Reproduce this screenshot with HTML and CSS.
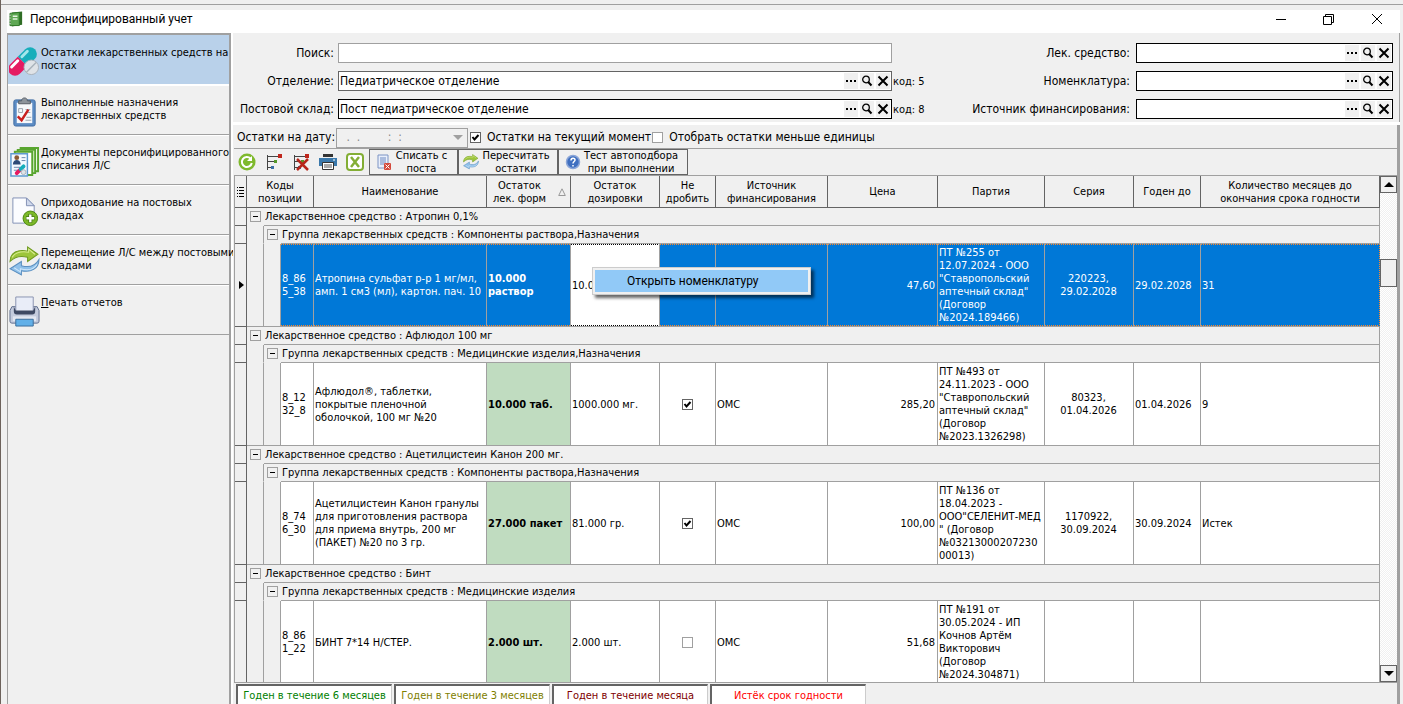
FILE: index.html
```html
<!DOCTYPE html>
<html lang="ru">
<head>
    <title>Персонифицированный учет</title>
    <meta charset="UTF-8">
    <meta name="viewport" content="width=device-width, initial-scale=1">
    <link rel="stylesheet" href="styles.css">
</head>
<body>
<svg class="sprite" aria-hidden="true">
    <symbol id="zoom" viewBox="0 0 12 12">
        <circle cx="5" cy="4.500" r="3.300" fill="none" stroke="#000" stroke-width="1.300"/>
        <path d="M7.200 7L10.500 10.500" stroke="#000" stroke-width="2"/>
    </symbol>
    <symbol id="cross" viewBox="0 0 12 12">
        <path d="M1.500 1.500L10.500 10.500M10.500 1.500L1.500 10.500" stroke="#000" stroke-width="2"/>
    </symbol>
    <symbol id="dots" viewBox="0 0 12 12">
        <path d="M1 5h2v2H1zM5 5h2v2H5zM9 5h2v2H9z"/>
    </symbol>
    <symbol id="swap" viewBox="0 0 30 30">
        <path d="M1 15C1 6 9 3 18 5V1l10 7-10 7v-4C11 9 6 10 1 15z" fill="#9cc53b" stroke="#6f9a1f"/>
        <path d="M29 13c0 9-8 13-17 11v4L1 22l11-7v4c7 2 13 1 17-6z" fill="#8fc1ea" stroke="#5b8fc0"/>
        <path d="M3 11c3-5 9-6 16-5V3l6 5" fill="none" stroke="#d7ec8e"/>
        <path d="M27 18c-3 5-9 6-16 4v3l-6-4" fill="none" stroke="#cfe6fa"/>
    </symbol>
    <symbol id="tree" viewBox="0 0 18 18">
        <path d="M2.500 2v15M2 3.500h11M2 8.500h7M2 14.500h5" fill="none" stroke="#444"/>
        <path d="M13 1h4v4h-4z" fill="#c0271d"/>
        <path d="M9 7h3v3H9z" fill="#55992a"/>
        <path d="M6 13h3v3H6z" fill="#3a6ea5"/>
    </symbol>
</svg>

<div class="outer-bar"></div>
<div class="window">
    <header class="titlebar">
        <svg class="app-icon" viewBox="0 0 16 16">
            <path d="M3 1l11-1v14L3 16z" fill="#2f6d25"/>
            <path d="M1 2l10-1v14H1z" fill="#5fa854" stroke="#2f7a28"/>
            <path d="M4 5h5M4 8h5" stroke="#e8f5e2" stroke-width="1.500"/>
            <path d="M0 4h2M0 7h2M0 10h2M0 13h2" stroke="#ccc"/>
        </svg>
        <h1>Персонифицированный учет</h1>
        <div class="window-buttons">
            <button aria-label="Свернуть"><svg viewBox="0 0 12 12"><path d="M1 6.500h10" stroke="#000"/></svg></button>
            <button aria-label="Восстановить"><svg viewBox="0 0 12 12"><path d="M.5 3.500h8v8h-8zM2.500 3V1.500h8v8H9" fill="none" stroke="#000"/></svg></button>
            <button aria-label="Закрыть"><svg viewBox="0 0 12 12"><path d="M1 1l10 10M11 1L1 11" stroke="#000"/></svg></button>
        </div>
    </header>

    <div class="content">
        <nav class="sidebar">
            <button class="nav-item active">
                <svg viewBox="0 0 32 32">
                    <g transform="rotate(-45 14 16)">
                        <path d="M14 9h11a7 7 0 0 1 0 14H14z" fill="#17aebb"/>
                        <path d="M14 9H3a7 7 0 0 0 0 14h11z" fill="#e51b61"/>
                        <path d="M2 12h9" stroke="#fff" stroke-width="3" stroke-linecap="round"/>
                        <path d="M17 12h8" stroke="#a3e7ec" stroke-width="3" stroke-linecap="round"/>
                    </g>
                    <circle cx="23" cy="22" r="7.500" fill="#dfe3e7" stroke="#a9b2ba"/>
                    <path d="M18 27L28 17" stroke="#a9b2ba" stroke-width="1.500"/>
                </svg>
                <span>Остатки лекарственных средств на<br>постах</span>
            </button>
            <button class="nav-item">
                <svg viewBox="0 0 32 32">
                    <rect x="5" y="4" width="22" height="27" rx="2" fill="#5c8cc4" stroke="#3f6ba3"/>
                    <rect x="8" y="7" width="16" height="21" fill="#f6f8fb"/>
                    <path d="M10 8V5h3c0-4 6-4 6 0h3v3z" fill="#8d949c" stroke="#555c64"/>
                    <path d="M10 13h4v4h-4zM17 14h5M17 17h5M18 22h5M17 25h6" fill="none" stroke="#9aa3ad"/>
                    <path d="M9 21l4 4 7-11" fill="none" stroke="#c81f1f" stroke-width="2.500"/>
                </svg>
                <span>Выполненные назначения<br>лекарственных средств</span>
            </button>
            <button class="nav-item">
                <svg viewBox="0 0 32 32">
                    <path d="M12 2h18v24H12z" fill="#fff" stroke="#58a52f" stroke-width="2"/>
                    <path d="M9 4h18v24H9z" fill="#dff2d2" stroke="#58a52f" stroke-width="2"/>
                    <path d="M6 6h18v24H6z" fill="#fff" stroke="#58a52f" stroke-width="2"/>
                    <path d="M2 8h17v23H2z" fill="#f4f9ff" stroke="#5d9ad0" stroke-width="1.500"/>
                    <circle cx="8" cy="12" r="2.500" fill="#8a5a35"/>
                    <path d="M4 19c0-6 8-6 8 0z" fill="#2d4a77"/>
                    <path d="M13 12h4M13 15h4M5 22h7M5 25h5" stroke="#6a88ad"/>
                    <path d="M8 28l4-4" stroke="#e51b61" stroke-width="4" stroke-linecap="round"/>
                    <path d="M12 24l3-3" stroke="#17aebb" stroke-width="4" stroke-linecap="round"/>
                    <circle cx="15" cy="27" r="2.500" fill="#dfe3e7" stroke="#a9b2ba"/>
                </svg>
                <span>Документы персонифицированного<br>списания Л/С</span>
            </button>
            <button class="nav-item">
                <svg viewBox="0 0 32 32">
                    <path d="M4 2h14l8 8v18H4z" fill="#fbfcff" stroke="#8291b5"/>
                    <path d="M18 2v8h8z" fill="#cfd8ec" stroke="#8291b5"/>
                    <circle cx="22" cy="23" r="7.500" fill="#7cb928" stroke="#4c8512"/>
                    <path d="M22 18.500v9M17.500 23h9" stroke="#447611" stroke-width="4"/>
                    <path d="M22 19v8M18 23h8" stroke="#fff" stroke-width="2.500"/>
                </svg>
                <span>Оприходование на постовых<br>складах</span>
            </button>
            <button class="nav-item">
                <svg><use href="#swap"/></svg>
                <span>Перемещение Л/С между постовыми<br>складами</span>
            </button>
            <button class="nav-item">
                <svg viewBox="0 0 32 32">
                    <path d="M3 11h26l2 4v11q0 2-2 2H3q-2 0-2-2V15z" fill="#c4cbdd" stroke="#626f8f"/>
                    <path d="M7 1h18v15H7z" fill="#e9edf8" stroke="#8993b0"/>
                    <path d="M5 11v5q0 3 3 3h16q3 0 3-3v-5l-2 4H7z" fill="#3e4963"/>
                    <path d="M4 21h24v5H4z" fill="#e3e7f1"/>
                    <path d="M7 24h18v7H7z" fill="#62b0e8" stroke="#3b6d9c"/>
                </svg>
                <span><u>П</u>ечать отчетов</span>
            </button>
        </nav>

        <main class="main">
            <section class="filters">
                <div class="filter-group wide">
                    <div class="field">
                        <label for="search">Поиск:</label>
                        <div class="lookup plain"><input id="search" type="text"></div>
                        <span class="code"></span>
                    </div>
                    <div class="field">
                        <label for="department">Отделение:</label>
                        <div class="lookup gray">
                            <input id="department" type="text" value="Педиатрическое отделение">
                            <button aria-label="Выбрать"><svg><use href="#dots"/></svg></button>
                            <button aria-label="Найти"><svg><use href="#zoom"/></svg></button>
                            <button aria-label="Очистить"><svg><use href="#cross"/></svg></button>
                        </div>
                        <span class="code">код: 5</span>
                    </div>
                    <div class="field">
                        <label for="stock">Постовой склад:</label>
                        <div class="lookup">
                            <input id="stock" type="text" value="Пост педиатрическое отделение">
                            <button aria-label="Выбрать"><svg><use href="#dots"/></svg></button>
                            <button aria-label="Найти"><svg><use href="#zoom"/></svg></button>
                            <button aria-label="Очистить"><svg><use href="#cross"/></svg></button>
                        </div>
                        <span class="code">код: 8</span>
                    </div>
                </div>
                <div class="filter-group">
                    <div class="field">
                        <label for="drug">Лек. средство:</label>
                        <div class="lookup">
                            <input id="drug" type="text">
                            <button aria-label="Выбрать"><svg><use href="#dots"/></svg></button>
                            <button aria-label="Найти"><svg><use href="#zoom"/></svg></button>
                            <button aria-label="Очистить"><svg><use href="#cross"/></svg></button>
                        </div>
                    </div>
                    <div class="field">
                        <label for="nomenclature">Номенклатура:</label>
                        <div class="lookup">
                            <input id="nomenclature" type="text">
                            <button aria-label="Выбрать"><svg><use href="#dots"/></svg></button>
                            <button aria-label="Найти"><svg><use href="#zoom"/></svg></button>
                            <button aria-label="Очистить"><svg><use href="#cross"/></svg></button>
                        </div>
                    </div>
                    <div class="field">
                        <label for="funding">Источник финансирования:</label>
                        <div class="lookup">
                            <input id="funding" type="text">
                            <button aria-label="Выбрать"><svg><use href="#dots"/></svg></button>
                            <button aria-label="Найти"><svg><use href="#zoom"/></svg></button>
                            <button aria-label="Очистить"><svg><use href="#cross"/></svg></button>
                        </div>
                    </div>
                </div>
            </section>

            <div class="workspace">
                <div class="date-row">
                    <label for="date">Остатки на дату:</label>
                    <select id="date" disabled>
                        <option>&nbsp;.&nbsp; .&nbsp; &nbsp; &nbsp; &nbsp; :&nbsp; :</option>
                    </select>
                    <input type="checkbox" id="current" checked>
                    <label for="current">Остатки на текущий момент</label>
                    <input type="checkbox" id="less">
                    <label for="less">Отобрать остатки меньше единицы</label>
                </div>

                <div class="toolbar">
                    <button class="tool" aria-label="Обновить">
                        <svg viewBox="0 0 18 18">
                            <circle cx="9" cy="9" r="8.500" fill="#7fb92d"/>
                            <path d="M12.500 5.500A5 5 0 1 0 13.800 10" fill="none" stroke="#fff" stroke-width="2"/>
                            <path d="M14 3v5H9z" fill="#fff"/>
                        </svg>
                    </button>
                    <button class="tool" aria-label="Развернуть"><svg><use href="#tree"/></svg></button>
                    <button class="tool" aria-label="Свернуть группы">
                        <svg viewBox="0 0 18 18">
                            <use href="#tree" width="18" height="18"/>
                            <path d="M5 6l11 11M16 6L5 17" stroke="#b7261b" stroke-width="2.500"/>
                        </svg>
                    </button>
                    <button class="tool" aria-label="Печать">
                        <svg viewBox="0 0 18 18">
                            <path d="M4 1h10v3H4z" fill="#333"/>
                            <path d="M0 5h18v8H0z" fill="#3a78ab"/>
                            <path d="M3.500 9.500h11v7h-11z" fill="#fff" stroke="#333"/>
                            <path d="M5 12h8M5 14h8" stroke="#555"/>
                            <path d="M14 7h2" stroke="#fff"/>
                        </svg>
                    </button>
                    <button class="tool" aria-label="Экспорт в Excel">
                        <svg viewBox="0 0 18 18">
                            <rect x="1" y="1" width="16" height="16" rx="3" fill="#fff" stroke="#83ae35" stroke-width="2"/>
                            <path d="M5 4l8 10M13 4L5 14" stroke="#83ae35" stroke-width="2.500"/>
                        </svg>
                    </button>
                    <button class="tool-button write-off">
                        <svg viewBox="0 0 16 16">
                            <path d="M2 1h10v13H2z" fill="#e9effb" stroke="#7d94c4"/>
                            <path d="M4 4h6M4 6h6M4 8h6M4 10h4" stroke="#6f8bc2"/>
                            <rect x="8" y="9" width="7" height="7" rx="1" fill="#d44a3c"/>
                            <path d="M9.500 10.500l4 4M13.500 10.500l-4 4" stroke="#fff"/>
                        </svg>
                        <span>Списать с<br>поста</span>
                    </button>
                    <button class="tool-button recount">
                        <svg><use href="#swap"/></svg>
                        <span>Пересчитать<br>остатки</span>
                    </button>
                    <button class="tool-button auto-test">
                        <svg viewBox="0 0 16 16">
                            <circle cx="8" cy="8" r="6.500" fill="#3f6fc0" stroke="#8ba6d8" stroke-width="1.500"/>
                            <path d="M6 6.500c0-3 4-3 4-.5 0 1.500-2 1.500-2 3.500M8 11v1.500" fill="none" stroke="#fff" stroke-width="1.500"/>
                        </svg>
                        <span>Тест автоподбора<br>при выполнении</span>
                    </button>
                </div>

                <div class="grid">
                    <div class="grid-view">
                        <table>
                            <colgroup>
                                <col class="c-rail"><col class="c-indent"><col class="c-indent"><col class="c-code">
                                <col class="c-name"><col class="c-form"><col class="c-dose"><col class="c-split">
                                <col class="c-source"><col class="c-price"><col class="c-batch"><col class="c-series">
                                <col class="c-until"><col>
                            </colgroup>
                            <thead>
                            <tr>
                                <th>
                                    <svg class="menu-icon" viewBox="0 0 7 10">
                                        <path d="M0 .5h1M2 .5h5M0 3.500h1M2 3.500h5M0 6.500h1M2 6.500h5M0 9.500h1M2 9.500h5" stroke="#000"/>
                                    </svg>
                                </th>
                                <th colspan="3">Коды<br>позиции</th>
                                <th>Наименование</th>
                                <th>
                                    <div class="sorted">
                                        <span>Остаток<br>лек. форм</span>
                                        <svg viewBox="0 0 8 8"><path d="M4 .8L7.300 7.500H.7z" fill="none" stroke="#999"/></svg>
                                    </div>
                                </th>
                                <th>Остаток<br>дозировки</th>
                                <th>Не<br>дробить</th>
                                <th>Источник<br>финансирования</th>
                                <th>Цена</th>
                                <th>Партия</th>
                                <th>Серия</th>
                                <th>Годен до</th>
                                <th>Количество месяцев до<br>окончания срока годности</th>
                            </tr>
                            </thead>
                            <tbody>
                            <tr class="group">
                                <td class="rail"></td>
                                <td class="toggle"><button aria-label="Свернуть"></button></td>
                                <td colspan="12">Лекарственное средство : Атропин 0,1%</td>
                            </tr>
                            <tr class="group">
                                <td class="rail"></td>
                                <td class="indent"></td>
                                <td class="toggle"><button aria-label="Свернуть"></button></td>
                                <td colspan="11">Группа лекарственных средств : Компоненты раствора,Назначения</td>
                            </tr>
                            <tr class="item selected">
                                <td class="rail"><span class="marker"></span></td>
                                <td class="indent"></td>
                                <td class="indent"></td>
                                <td>8_86<br>5_38</td>
                                <td>Атропина сульфат р-р 1 мг/мл,<br>амп. 1 см3 (мл), картон. пач. 10</td>
                                <td class="form">10.000<br>раствор</td>
                                <td class="editing">
                                    10.000 мг.
                                    <div class="context-menu" role="menu">
                                        <button role="menuitem">Открыть номенклатуру</button>
                                    </div>
                                </td>
                                <td></td>
                                <td></td>
                                <td class="price">47,60</td>
                                <td>ПТ №255 от<br>12.07.2024 - ООО<br>"Ставропольский<br>аптечный склад"<br>(Договор<br>№2024.189466)</td>
                                <td class="center">220223,<br>29.02.2028</td>
                                <td>29.02.2028</td>
                                <td>31</td>
                            </tr>
                            <tr class="group">
                                <td class="rail"></td>
                                <td class="toggle"><button aria-label="Свернуть"></button></td>
                                <td colspan="12">Лекарственное средство : Афлюдол 100 мг</td>
                            </tr>
                            <tr class="group">
                                <td class="rail"></td>
                                <td class="indent"></td>
                                <td class="toggle"><button aria-label="Свернуть"></button></td>
                                <td colspan="11">Группа лекарственных средств : Медицинские изделия,Назначения</td>
                            </tr>
                            <tr class="item">
                                <td class="rail"></td>
                                <td class="indent"></td>
                                <td class="indent"></td>
                                <td>8_12<br>32_8</td>
                                <td>Афлюдол®, таблетки,<br>покрытые пленочной<br>оболочкой, 100 мг №20</td>
                                <td class="form">10.000 таб.</td>
                                <td>1000.000 мг.</td>
                                <td class="center"><input type="checkbox" aria-label="Не дробить" checked></td>
                                <td>ОМС</td>
                                <td class="price">285,20</td>
                                <td>ПТ №493 от<br>24.11.2023 - ООО<br>"Ставропольский<br>аптечный склад"<br>(Договор<br>№2023.1326298)</td>
                                <td class="center">80323,<br>01.04.2026</td>
                                <td>01.04.2026</td>
                                <td>9</td>
                            </tr>
                            <tr class="group">
                                <td class="rail"></td>
                                <td class="toggle"><button aria-label="Свернуть"></button></td>
                                <td colspan="12">Лекарственное средство : Ацетилцистеин Канон 200 мг.</td>
                            </tr>
                            <tr class="group">
                                <td class="rail"></td>
                                <td class="indent"></td>
                                <td class="toggle"><button aria-label="Свернуть"></button></td>
                                <td colspan="11">Группа лекарственных средств : Компоненты раствора,Назначения</td>
                            </tr>
                            <tr class="item">
                                <td class="rail"></td>
                                <td class="indent"></td>
                                <td class="indent"></td>
                                <td>8_74<br>6_30</td>
                                <td>Ацетилцистеин Канон гранулы<br>для приготовления раствора<br>для приема внутрь, 200 мг<br>(ПАКЕТ) №20 по 3 гр.</td>
                                <td class="form">27.000 пакет</td>
                                <td>81.000 гр.</td>
                                <td class="center"><input type="checkbox" aria-label="Не дробить" checked></td>
                                <td>ОМС</td>
                                <td class="price">100,00</td>
                                <td>ПТ №136 от<br>18.04.2023 -<br>ООО"СЕЛЕНИТ-МЕД<br>" (Договор<br>№03213000207230<br>00013)</td>
                                <td class="center">1170922,<br>30.09.2024</td>
                                <td>30.09.2024</td>
                                <td>Истек</td>
                            </tr>
                            <tr class="group">
                                <td class="rail"></td>
                                <td class="toggle"><button aria-label="Свернуть"></button></td>
                                <td colspan="12">Лекарственное средство : Бинт</td>
                            </tr>
                            <tr class="group">
                                <td class="rail"></td>
                                <td class="indent"></td>
                                <td class="toggle"><button aria-label="Свернуть"></button></td>
                                <td colspan="11">Группа лекарственных средств : Медицинские изделия</td>
                            </tr>
                            <tr class="item">
                                <td class="rail"></td>
                                <td class="indent"></td>
                                <td class="indent"></td>
                                <td>8_86<br>1_22</td>
                                <td>БИНТ 7*14 Н/СТЕР.</td>
                                <td class="form">2.000 шт.</td>
                                <td>2.000 шт.</td>
                                <td class="center"><input type="checkbox" class="off" aria-label="Не дробить"></td>
                                <td>ОМС</td>
                                <td class="price">51,68</td>
                                <td>ПТ №191 от<br>30.05.2024 - ИП<br>Кочнов Артём<br>Викторович<br>(Договор<br>№2024.304871)</td>
                                <td></td>
                                <td></td>
                                <td></td>
                            </tr>
                            </tbody>
                        </table>
                    </div>
                    <div class="scrollbar">
                        <button aria-label="Вверх"><span class="arrow up"></span></button>
                        <div class="track"><div class="thumb"></div></div>
                        <button aria-label="Вниз"><span class="arrow down"></span></button>
                    </div>
                </div>

                <footer class="legend">
                    <span class="half-year">Годен в течение 6 месяцев</span>
                    <span class="quarter">Годен в течение 3 месяцев</span>
                    <span class="month">Годен в течение месяца</span>
                    <span class="expired">Истёк срок годности</span>
                </footer>
            </div>
        </main>
    </div>
</div>
</body>
</html>
```
FILE: styles.css
```css
* {
    box-sizing: border-box;
}

body {
    margin: 0;
    height: 100vh;
    display: flex;
    flex-direction: column;
    overflow: hidden;
    background: #f0f0f0;
    border-left: 1px solid #6d625b;
    font-family: Tahoma, "DejaVu Sans Condensed", "DejaVu Sans", sans-serif;
    font-size: 11px;
    line-height: 13px;
    color: #000;
}

button, input, select {
    font: inherit;
    color: inherit;
    margin: 0;
    padding: 0;
    border: 0;
    border-radius: 0;
    background: none;
}

svg {
    display: block;
    flex: none;
}

.sprite {
    position: absolute;
    width: 0;
    height: 0;
}

.outer-bar {
    flex: none;
    height: 5px;
    border-bottom: 1px solid #a0a0a0;
}

.window {
    flex: 1;
    min-height: 0;
    display: flex;
    flex-direction: column;
    margin: 5px 3px 0 6px;
}

.titlebar {
    flex: none;
    display: flex;
    align-items: center;
    height: 23px;
    padding: 0 17px 5px 2px;
    background: #fff;
}

.app-icon {
    width: 15px;
    height: 16px;
}

.titlebar h1 {
    flex: 1;
    margin: 0 0 0 6px;
    font: 12px/16px "Segoe UI", Roboto, sans-serif;
}

.window-buttons {
    display: flex;
    gap: 36px;
}

.window-buttons svg {
    width: 12px;
    height: 12px;
}

.content {
    flex: 1;
    min-height: 0;
    display: flex;
    background: #fff;
}

/* Sidebar */

.sidebar {
    flex: none;
    width: 224px;
    display: flex;
    flex-direction: column;
    background: #f0f0f0;
    border: 1px solid #a0a0a0;
    border-width: 2px 2px 0 1px;
}

.nav-item {
    flex: none;
    display: flex;
    align-items: flex-start;
    gap: 1px;
    height: 50px;
    padding: 10px 0 0 1px;
    border-top: 1px solid #fff;
    border-bottom: 1px solid #a0a0a0;
    text-align: left;
    white-space: nowrap;
}

.nav-item.active {
    background: #b9d1ea;
    border-top-color: #b9d1ea;
    border-bottom-color: #fff;
}

.nav-item svg {
    width: 31px;
    height: 31px;
}

/* Filters */

.main {
    flex: 1;
    min-width: 0;
    display: flex;
    flex-direction: column;
    gap: 3px;
    padding-left: 2px;
}

.filters {
    flex: none;
    display: flex;
    padding: 10px 6px 3px 4px;
    background: #f0f0f0;
    border-right: 1px solid #a0a0a0;
    font-size: 12px;
}

.filter-group {
    display: flex;
    flex-direction: column;
    gap: 8px;
    width: 460px;
}

.filter-group.wide {
    flex: 1;
    width: auto;
}

.field {
    display: flex;
    align-items: center;
    height: 20px;
}

.field label {
    flex: 1;
    margin-right: 6px;
    text-align: right;
    white-space: nowrap;
}

.wide label {
    flex: none;
    width: 97px;
    margin-right: 4px;
}

.lookup {
    flex: none;
    display: flex;
    align-items: center;
    gap: 2px;
    width: 257px;
    height: 20px;
    padding: 1px;
    background: #fff;
    border: 1px solid #000;
}

.wide .lookup {
    flex: 1;
}

.lookup.gray {
    border-color: #646464;
}

.lookup.plain {
    border-color: #a0a0a0;
}

.lookup input {
    flex: 1;
    min-width: 0;
    height: 16px;
    outline: 0;
}

.lookup button {
    width: 14px;
    height: 16px;
    padding: 2px 1px;
    background: #f0f0f0;
}

.lookup svg {
    width: 12px;
    height: 12px;
}

.code {
    width: 41px;
    padding-left: 1px;
    font-size: 11px;
    white-space: nowrap;
}

/* Toolbar */

.workspace {
    flex: 1;
    min-height: 0;
    display: flex;
    flex-direction: column;
    padding-left: 1px;
    background: #f0f0f0;
    border-right: 3px solid #a0a0a0;
}

.date-row {
    flex: none;
    display: flex;
    align-items: center;
    height: 24px;
    padding: 2px 0 0 3px;
    border-bottom: 1px solid #a0a0a0;
    font-size: 12px;
    white-space: nowrap;
}

.date-row select {
    width: 132px;
    height: 20px;
    margin: 0 2px 0 1px;
    padding-left: 6px;
    appearance: none;
    border: 1px solid #a0a0a0;
    background: url("data:image/svg+xml,%3Csvg xmlns='http://www.w3.org/2000/svg' width='10' height='5'%3E%3Cpath d='M0 0h10L5 5z' fill='%23a0a0a0'/%3E%3C/svg%3E") no-repeat right 4px center;
    color: #888;
    opacity: 1;
}

input[type="checkbox"] {
    appearance: none;
    flex: none;
    width: 11px;
    height: 11px;
    border: 1px solid #646464;
    background: #fff;
    vertical-align: middle;
}

input[type="checkbox"]:checked {
    background: #fff url("data:image/svg+xml,%3Csvg xmlns='http://www.w3.org/2000/svg' width='9' height='9'%3E%3Cpath d='M1.500 4L3.500 6.500 7.500 2' fill='none' stroke='%23000' stroke-width='2'/%3E%3C/svg%3E") center;
}

input.off,
#less {
    border-color: #a0a0a0;
}

.date-row input + label {
    margin: 0 1px 0 6px;
}

.toolbar {
    flex: none;
    display: flex;
    height: 26px;
}

.tool {
    width: 27px;
    padding-left: 4px;
}

.tool svg {
    width: 18px;
    height: 18px;
}

.tool-button {
    display: flex;
    align-items: center;
    height: 26px;
    padding: 0 6px;
    border: 1px solid #646464;
}

.tool-button span {
    flex: 1;
    line-height: 13px;
    white-space: nowrap;
}

.tool-button svg {
    width: 16px;
    height: 16px;
}

.write-off {
    width: 89px;
}

.recount {
    width: 100px;
    padding: 0 4px;
}

.auto-test {
    width: 130px;
}

/* Grid */

.grid {
    flex: 1;
    min-height: 0;
    display: flex;
    background: #fff;
    border: 1px solid #a0a0a0;
    border-width: 1px 0 1px 1px;
}

.grid-view {
    flex: 1;
    min-width: 0;
    overflow: hidden;
}

table {
    width: 100%;
    table-layout: fixed;
    border-collapse: separate;
    border-spacing: 0;
}

.c-rail { width: 12px; }
.c-indent { width: 17px; }
.c-code { width: 33px; }
.c-name { width: 173px; }
.c-form { width: 84px; }
.c-dose { width: 89px; }
.c-split { width: 56px; }
.c-source { width: 112px; }
.c-price { width: 110px; }
.c-batch { width: 107px; }
.c-series { width: 89px; }
.c-until { width: 67px; }

th {
    height: 32px;
    padding: 0;
    background: #f0f0f0;
    border: 1px solid #646464;
    border-width: 0 1px 1px 0;
    font-weight: normal;
    white-space: nowrap;
}

.menu-icon {
    width: 7px;
    height: 10px;
    margin: 0 auto;
}

.sorted {
    display: flex;
    align-items: center;
    gap: 12px;
    padding-left: 6px;
}

.sorted svg {
    width: 8px;
    height: 8px;
}

td {
    height: 18px;
    padding: 0 2px 0 1px;
    border: 1px solid #a0a0a0;
    border-width: 0 1px 1px 0;
    white-space: nowrap;
}

.group td {
    background: #f0f0f0;
}

.item td {
    height: 83px;
    background: #fff;
}

.item td.rail,
.item td.indent {
    padding: 0;
    background: #f0f0f0;
}

td.rail {
    border-color: #646464;
}

.group .indent,
.group .toggle {
    border-bottom-color: #f0f0f0;
}

.group .toggle {
    padding: 0 0 0 3px;
    border-right: 0;
}

.toggle button {
    display: block;
    position: relative;
    width: 11px;
    height: 11px;
    border: 1px solid #a0a0a0;
}

.toggle button::before {
    content: "";
    position: absolute;
    left: 2px;
    top: 4px;
    width: 5px;
    height: 1px;
    background: #000;
}

.marker {
    display: block;
    margin-left: 4px;
    width: 5px;
    border: 4px solid transparent;
    border-left: 5px solid #000;
    border-right: 0;
}

.item .form {
    background: #c0dcc0;
    font-weight: bold;
}

.center {
    text-align: center;
}

.price {
    text-align: right;
}

/* focus dots along the top and bottom of the selected row */
.selected td:not(.rail):not(.indent) {
    --fill: #0078d7;
    --dot: #ff8728;
    --dots: repeating-linear-gradient(90deg, var(--dot) 0 1px, var(--fill) 1px 2px);
    background: var(--dots) top / 100% 1px no-repeat, var(--dots) bottom / 100% 1px no-repeat, var(--fill);
    color: #fff;
}

.selected td:last-child {
    border-right: 1px dotted #ff8728;
}

.selected td.editing:not(.rail):not(.indent) {
    --fill: #fff;
    --dot: #000;
    position: relative;
    color: #000;
}

.context-menu {
    position: absolute;
    left: 21px;
    top: 23px;
    width: 219px;
    padding: 2px;
    background: #f0f0f0;
    border: 1px solid #ccc;
    box-shadow: 3px 3px 3px rgba(0, 0, 0, .6);
}

.context-menu button {
    display: block;
    width: 100%;
    height: 22px;
    padding-left: 32px;
    background: #91c9f7;
    font: 12px/16px "Segoe UI", Roboto, sans-serif;
    text-align: left;
}

/* Scrollbar */

.scrollbar {
    flex: none;
    display: flex;
    flex-direction: column;
    width: 17px;
}

.scrollbar button {
    flex: none;
    height: 17px;
    border: 1px solid #646464;
    background: #f0f0f0;
}

.track {
    flex: 1;
    padding-top: 66px;
    background: repeating-conic-gradient(#fff 0 25%, #f0f0f0 0 50%) 0 0 / 2px 2px;
}

.thumb {
    height: 28px;
    border: 1px solid #646464;
    background: #f0f0f0;
}

.arrow {
    display: block;
    width: 9px;
    margin: 0 auto;
    border: 5px solid transparent;
    border-width: 5px 5px 0;
    border-top-color: #000;
}

.arrow.up {
    border-width: 0 5px 5px;
    border-bottom-color: #000;
}

/* Legend */

.legend {
    flex: none;
    display: flex;
    gap: 2px;
    height: 21px;
    padding: 1px 0 0 2px;
    overflow: hidden;
}

.legend span {
    width: 156px;
    height: 24px;
    padding-top: 3px;
    background: #fff;
    border: 1px solid #646464;
    border-width: 2px 1px 1px 2px;
    border-right-color: #ccc;
    text-align: center;
    white-space: nowrap;
}

.half-year { color: #008000; }
.quarter { color: #808000; }
.month { color: #800000; }
.expired { color: #f00; }
```
